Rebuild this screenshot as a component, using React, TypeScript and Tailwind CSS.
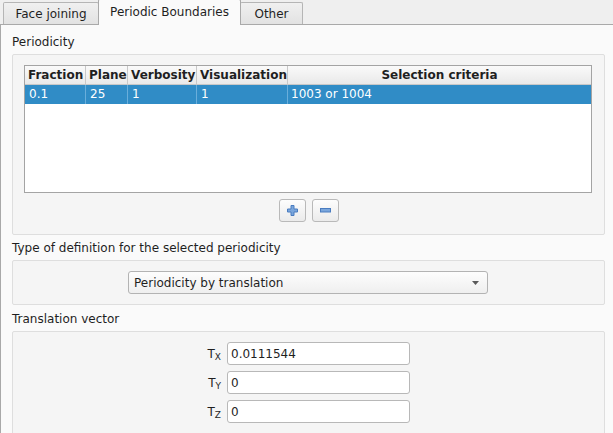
export default function App() {
  const cols = [
    { name: "Fraction", w: "w-[61px]", v: "0.1" },
    { name: "Plane", w: "w-[42px]", v: "25" },
    { name: "Verbosity", w: "w-[69px]", v: "1" },
    { name: "Visualization", w: "w-[91px]", v: "1" },
  ];

  const vec = [
    { sub: "X", v: "0.0111544" },
    { sub: "Y", v: "0" },
    { sub: "Z", v: "0" },
  ];

  return (
    <div className="h-[433px] w-[613px] overflow-hidden bg-[#efefef] font-['DejaVu_Sans',sans-serif] text-[12px] text-[#1f1f1f]">
      {/* tabs */}
      <div className="flex h-[25px] items-end border-b border-[#a9a9a9] pl-[3px]">
        <div className="flex h-[22px] w-[96px] items-center justify-center rounded-t-[2px] border border-b-0 border-[#b5b5b5] bg-gradient-to-b from-[#f0f0f0] to-[#e2e2e2]">
          Face joining
        </div>
        <div className="relative z-10 -mb-px -ml-px flex h-[26px] w-[143px] items-center justify-center rounded-t-[2px] border border-b-0 border-[#a9a9a9] bg-[#fafafa] pb-[2px]">
          Periodic Boundaries
        </div>
        <div className="-ml-px flex h-[22px] w-[63px] items-center justify-center rounded-t-[2px] border border-b-0 border-[#b5b5b5] bg-gradient-to-b from-[#f0f0f0] to-[#e2e2e2]">
          Other
        </div>
      </div>

      {/* pane */}
      <div className="h-[408px] border-l border-[#a9a9a9] bg-[#fafafa] pl-[11px]">
        <div className="h-[29px] pt-[10px] leading-[15px]">Periodicity</div>
        <div className="h-[181px] w-[593px] rounded-[2px] border border-[#dedede] bg-[#f5f5f5] px-[11px] pt-[10px]">
          <div className="h-[128px] w-[568px] border border-[#a4a4a4] bg-white">
            <div className="flex h-[19px] border-b border-[#c8c8c8] bg-gradient-to-b from-[#fafafa] to-[#e9e9e9] font-bold leading-[19px]">
              {cols.map((c) => (
                <div key={c.name} className={`${c.w} shrink-0 border-r border-[#c8c8c8] pl-[3px]`}>
                  {c.name}
                </div>
              ))}
              <div className="flex-1 text-center">Selection criteria</div>
            </div>
            <div className="flex h-[19px] bg-[#308cc6] leading-[19px] text-white">
              {cols.map((c) => (
                <div key={c.name} className={`${c.w} shrink-0 border-r border-[#6aaedb] pl-[4px]`}>
                  {c.v}
                </div>
              ))}
              <div className="flex-1 pl-[3px]">1003 or 1004</div>
            </div>
          </div>
          <div className="mt-[6px] flex justify-center gap-[6px]">
            <button className="flex h-[23px] w-[27px] items-center justify-center rounded-[3px] border border-[#b9b9b9] bg-gradient-to-b from-[#fdfdfd] to-[#ebebeb]">
              <svg width="11" height="11" viewBox="0 0 11 11">
                <path d="M4 0.5h3v3.5h3.5v3h-3.5v3.5h-3v-3.5h-3.5v-3h3.5z" fill="#7aa6dc" stroke="#4a7cc0" strokeWidth="1" />
              </svg>
            </button>
            <button className="flex h-[23px] w-[27px] items-center justify-center rounded-[3px] border border-[#b9b9b9] bg-gradient-to-b from-[#fdfdfd] to-[#ebebeb]">
              <svg width="11" height="5" viewBox="0 0 11 5">
                <rect x="0.5" y="0.5" width="10" height="3.5" fill="#7aa6dc" stroke="#4a7cc0" strokeWidth="1" />
              </svg>
            </button>
          </div>
        </div>

        <div className="h-[25px] pt-[6px] leading-[15px]">Type of definition for the selected periodicity</div>
        <div className="h-[45px] w-[593px] rounded-[2px] border border-[#dedede] bg-[#f5f5f5] pl-[115px] pt-[10px]">
          <div className="flex h-[23px] w-[360px] items-center justify-between rounded-[3px] border border-[#b3b3b3] bg-gradient-to-b from-[#fdfdfd] to-[#efefef] pl-[5px] pr-[8px]">
            <span>Periodicity by translation</span>
            <svg width="7" height="4" viewBox="0 0 7 4">
              <path d="M0 0h7l-3.5 4z" fill="#5a5a5a" />
            </svg>
          </div>
        </div>

        <div className="h-[26px] pt-[7px] leading-[15px]">Translation vector</div>
        <div className="h-[110px] w-[593px] rounded-[2px] border border-[#dedede] bg-[#f5f5f5] pt-[10px]">
          <div className="flex flex-col gap-[6px]">
            {vec.map((r) => (
              <div key={r.sub} className="flex h-[23px] items-center">
                <div className="w-[214px] pr-[6px] text-right">
                  T<span className="relative top-[2px] text-[9px]">{r.sub}</span>
                </div>
                <div className="flex h-[23px] w-[183px] items-center rounded-[3px] border border-[#b8b8b8] bg-white pl-[3px]">
                  {r.v}
                </div>
              </div>
            ))}
          </div>
        </div>
      </div>
    </div>
  );
}
